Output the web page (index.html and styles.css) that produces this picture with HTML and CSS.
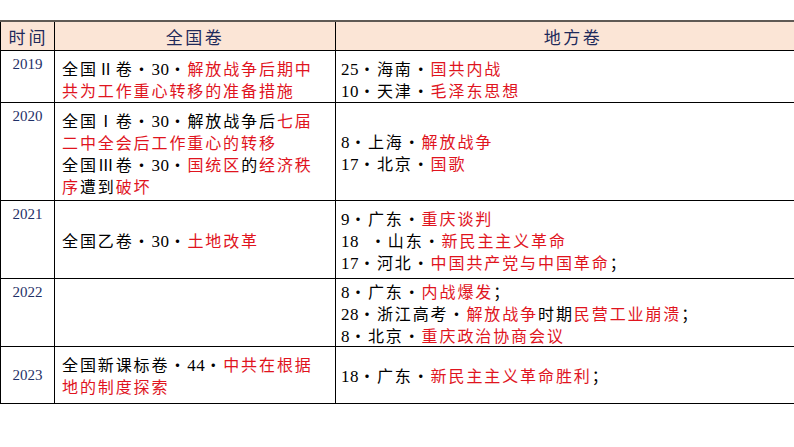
FILE: index.html
```html
<!DOCTYPE html>
<html lang="zh">
<head>
<meta charset="utf-8">
<link rel="stylesheet" href="styles.css">
</head>
<body>
<div class="page">
<table class="exam">
  <colgroup><col class="c1"><col class="c2"><col class="c3"></colgroup>
  <thead>
    <tr class="head"><th>时间</th><th>全国卷</th><th>地方卷</th></tr>
  </thead>
  <tbody>
    <tr class="r2019">
      <td class="year">2019</td>
      <td class="nat top">全国Ⅱ卷・<span class="n">30</span>・<span class="red">解放战争后期中</span><br><span class="red">共为工作重心转移的准备措施</span></td>
      <td class="loc top"><span class="n">25</span>・海南・<span class="red">国共内战</span><br><span class="n">10</span>・天津・<span class="red">毛泽东思想</span></td>
    </tr>
    <tr class="r2020">
      <td class="year">2020</td>
      <td class="nat top">全国Ⅰ卷・<span class="n">30</span>・解放战争后<span class="red">七届</span><br><span class="red">二中全会后工作重心的转移</span><br>全国Ⅲ卷・<span class="n">30</span>・<span class="red">国统区</span>的<span class="red">经济秩</span><br><span class="red">序</span>遭到<span class="red">破坏</span></td>
      <td class="loc"><span class="n">8</span>・上海・<span class="red">解放战争</span><br><span class="n">17</span>・北京・<span class="red">国歌</span></td>
    </tr>
    <tr class="r2021">
      <td class="year">2021</td>
      <td class="nat">全国乙卷・<span class="n">30</span>・<span class="red">土地改革</span></td>
      <td class="loc"><span class="n">9</span>・广东・<span class="red">重庆谈判</span><br><span class="n">18</span>&nbsp;&nbsp;・山东・<span class="red">新民主主义革命</span><br><span class="n">17</span>・河北・<span class="red">中国共产党与中国革命</span>；</td>
    </tr>
    <tr class="r2022">
      <td class="year">2022</td>
      <td class="nat"></td>
      <td class="loc"><span class="n">8</span>・广东・<span class="red">内战爆发</span>；<br><span class="n">28</span>・浙江高考・<span class="red">解放战争</span>时期<span class="red">民营工业崩溃</span>；<br><span class="n">8</span>・北京・<span class="red">重庆政治协商会议</span></td>
    </tr>
    <tr class="r2023">
      <td class="year mid">2023</td>
      <td class="nat">全国新课标卷・<span class="n">44</span>・<span class="red">中共在根据</span><br><span class="red">地的制度探索</span></td>
      <td class="loc"><span class="n">18</span>・广东・<span class="red">新民主主义革命胜利</span>；</td>
    </tr>
  </tbody>
</table>
</div>
</body>
</html>
```

FILE: styles.css
```css
html, body {
  margin: 0;
  padding: 0;
  background: #ffffff;
}
.page {
  width: 794px;
  height: 447px;
  overflow: hidden;
  padding-top: 20px;
  box-sizing: border-box;
}
.exam {
  width: 810px;
  border-collapse: collapse;
  table-layout: fixed;
  font-family: "Noto Sans CJK SC", "Liberation Serif", sans-serif;
  font-size: 16px;
  color: #000;
}
.c1 { width: 54px; }
.c2 { width: 281px; }
.c3 { width: 475px; }
.exam th, .exam td {
  border: 1px solid #000;
  padding: 0;
  overflow: hidden;
  white-space: nowrap;
}
.exam thead th {
  border-top: 2px solid #5f5a55;
}
.head th {
  height: 28px;
  background: #fbe5d6;
  font-weight: normal;
  color: #1f2a5a;
  font-size: 17px;
  letter-spacing: 2.5px;
  line-height: 27px;
  text-align: center;
}
.head th:first-child {
  letter-spacing: 3px;
  padding-left: 2px;
}
.r2019 td { height: 52px; }
.r2020 td { height: 98px; }
.r2021 td { height: 78px; }
.r2022 td { height: 68px; }
.r2023 td { height: 57px; }
.year {
  vertical-align: top;
  text-align: center;
  font-family: "Liberation Serif", serif;
  font-size: 15px;
  line-height: 18px;
  color: #1f3068;
  padding-top: 4px !important;
  box-sizing: border-box;
}
.year.mid {
  vertical-align: middle;
  padding-top: 0 !important;
}
.nat, .loc {
  vertical-align: middle;
  line-height: 22px;
  letter-spacing: 1.9px;
  box-sizing: border-box;
}
.nat {
  padding-left: 7px !important;
  padding-right: 16px !important;
}
.loc {
  padding-left: 5px !important;
}
.top {
  vertical-align: top;
  padding-top: 6px !important;
}
.n {
  font-family: "Liberation Serif", serif;
  font-size: 17px;
  line-height: 1;
  letter-spacing: 0.5px;
}
.red {
  color: #e0141e;
}
```
